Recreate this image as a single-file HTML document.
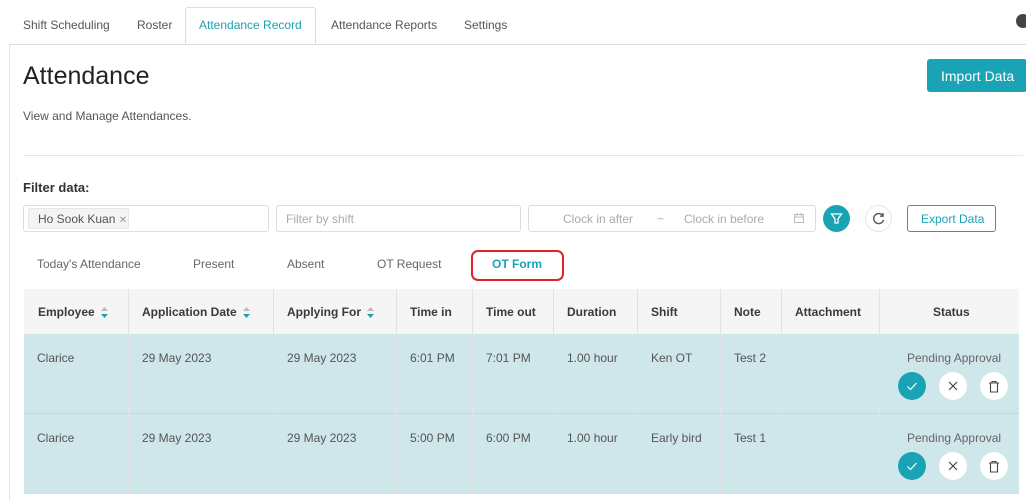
<!DOCTYPE html>
<html><head><style>
*{margin:0;padding:0;box-sizing:border-box}
body{width:1026px;height:500px;overflow:hidden;background:#fff;font-family:"Liberation Sans",sans-serif;color:#333;position:relative}
.a{position:absolute;white-space:nowrap}
.tab{font-size:12px;color:#555;top:18px}
.h{font-size:12px;font-weight:bold;color:#3a3a3a;top:305px}
.c{font-size:12px;color:#555}
.sort{display:inline-block;width:7px;vertical-align:middle;margin-left:6px}
.btn{width:28px;height:28px;border-radius:50%;background:#fff;display:flex;align-items:center;justify-content:center}
</style></head><body>
<div class="a tab" style="left:23px">Shift Scheduling</div>
<div class="a tab" style="left:137px">Roster</div>
<div class="a" style="left:185px;top:7px;width:131px;height:38px;border:1px solid #ddd;border-bottom:none;background:#fff;border-radius:3px 3px 0 0"></div>
<div class="a tab" style="left:199px;color:#1da0b0">Attendance Record</div>
<div class="a tab" style="left:331px">Attendance Reports</div>
<div class="a tab" style="left:464px">Settings</div>
<div class="a" style="left:1016px;top:14px;width:14px;height:14px;border-radius:50%;background:#444"></div>
<div class="a" style="left:9px;top:44px;width:1020px;height:1px;background:#ddd"></div>
<div class="a" style="left:9px;top:44px;width:1px;height:456px;background:#e4e4e4"></div>
<div class="a" style="left:23px;top:62px;font-size:25px;color:#222">Attendance</div>
<div class="a" style="left:927px;top:59px;width:100px;height:33px;background:#1aa3b5;border-radius:3px;color:#fff;font-size:14px;padding:9px 0 0 14px">Import Data</div>
<div class="a" style="left:23px;top:109px;font-size:12px;color:#555">View and Manage Attendances.</div>
<div class="a" style="left:23px;top:155px;width:1000px;height:1px;background:#e6e6e6"></div>
<div class="a" style="left:23px;top:180px;font-size:13px;font-weight:bold;color:#333">Filter data:</div>
<div class="a" style="left:23px;top:205px;width:246px;height:27px;border:1px solid #ddd;border-radius:3px"></div>
<div class="a" style="left:28px;top:208px;width:101px;height:21px;background:#f4f4f4;border:1px solid #e6e6e6;border-radius:2px;font-size:12px;color:#555;padding:3px 0 0 9px">Ho Sook Kuan <span style="color:#999;font-size:10px">✕</span></div>
<div class="a" style="left:276px;top:205px;width:245px;height:27px;border:1px solid #ddd;border-radius:3px;font-size:12px;color:#aaa;padding:6px 0 0 9px">Filter by shift</div>
<div class="a" style="left:528px;top:205px;width:288px;height:27px;border:1px solid #ddd;border-radius:3px"></div>
<div class="a" style="left:563px;top:212px;font-size:12px;color:#aaa">Clock in after</div>
<div class="a" style="left:657px;top:212px;font-size:12px;color:#aaa">~</div>
<div class="a" style="left:684px;top:212px;font-size:12px;color:#aaa">Clock in before</div>
<svg class="a" style="left:793px;top:212px" width="12" height="12" viewBox="0 0 12 12" fill="none" stroke="#bbb"><rect x="1.5" y="2.5" width="9" height="8"/><path d="M1.5 5h9M4 1v3M8 1v3"/></svg>
<div class="a" style="left:823px;top:205px;width:27px;height:27px;border-radius:50%;background:#1aa3b5"></div>
<svg class="a" style="left:830px;top:212px" width="13" height="13" viewBox="0 0 13 13" fill="none" stroke="#fff" stroke-width="1.3"><path d="M1.5 2h10L8 7v4H5V7z"/></svg>
<div class="a" style="left:865px;top:205px;width:27px;height:27px;border-radius:50%;border:1px solid #e4e4e4"></div>
<svg class="a" style="left:871px;top:211px" width="15" height="15" viewBox="0 0 15 15" fill="none" stroke="#555" stroke-width="1.4"><path d="M12 5A5 5 0 1 0 12.5 9"/><path d="M12 2v3.2H9"/></svg>
<div class="a" style="left:907px;top:205px;width:89px;height:27px;border:1px solid #1aa3b5;border-radius:3px;color:#1aa3b5;font-size:12px;padding:6px 0 0 13px">Export Data</div>
<div class="a c" style="left:37px;top:257px;color:#666">Today's Attendance</div>
<div class="a c" style="left:193px;top:257px;color:#666">Present</div>
<div class="a c" style="left:287px;top:257px;color:#666">Absent</div>
<div class="a c" style="left:377px;top:257px;color:#666">OT Request</div>
<div class="a" style="left:471px;top:250px;width:93px;height:31px;border:2.5px solid #e0202a;border-radius:7px"></div>
<div class="a" style="left:492px;top:257px;font-size:12px;font-weight:bold;color:#1aa3b5">OT Form</div>
<div class="a" style="left:24px;top:289px;width:995px;height:45px;background:#f5f5f5"></div>
<div class="a" style="left:24px;top:334px;width:995px;height:159px;background:#cfe6ea"></div>
<div class="a" style="left:24px;top:413px;width:995px;height:1px;background:#bfdadf"></div>
<div class="a" style="left:24px;top:493px;width:995px;height:1px;background:#ddd"></div>
<div class="a h" style="left:38px">Employee<svg class="sort" height="11" viewBox="0 0 7 11"><path d="M0 4L3.5 0 7 4z" fill="#bbb"/><path d="M0 7h7L3.5 11z" fill="#1aa3b5"/></svg></div>
<div class="a h" style="left:142px">Application Date<svg class="sort" height="11" viewBox="0 0 7 11"><path d="M0 4L3.5 0 7 4z" fill="#bbb"/><path d="M0 7h7L3.5 11z" fill="#1aa3b5"/></svg></div>
<div class="a h" style="left:287px">Applying For<svg class="sort" height="11" viewBox="0 0 7 11"><path d="M0 4L3.5 0 7 4z" fill="#bbb"/><path d="M0 7h7L3.5 11z" fill="#1aa3b5"/></svg></div>
<div class="a h" style="left:410px">Time in</div>
<div class="a h" style="left:486px">Time out</div>
<div class="a h" style="left:567px">Duration</div>
<div class="a h" style="left:651px">Shift</div>
<div class="a h" style="left:734px">Note</div>
<div class="a h" style="left:795px">Attachment</div>
<div class="a h" style="left:933px">Status</div>
<script>
[128,273,396,472,553,637,720,781,879].forEach(function(x){var d=document.createElement('div');d.className='a';d.style.cssText='left:'+x+'px;top:289px;width:1px;height:204px;background:#e2e2e2';document.body.appendChild(d);});
var rows=[[351,['Clarice','29 May 2023','29 May 2023','6:01 PM','7:01 PM','1.00 hour','Ken OT','Test 2']],[431,['Clarice','29 May 2023','29 May 2023','5:00 PM','6:00 PM','1.00 hour','Early bird','Test 1']]];
var xs=[37,142,287,410,486,567,651,734];
rows.forEach(function(r){r[1].forEach(function(t,i){var d=document.createElement('div');d.className='a c';d.style.cssText='left:'+xs[i]+'px;top:'+r[0]+'px';d.textContent=t;document.body.appendChild(d);});
var p=document.createElement('div');p.className='a c';p.style.cssText='left:907px;top:'+r[0]+'px;color:#666';p.textContent='Pending Approval';document.body.appendChild(p);
var y=r[0]+21;
var h='<div class="a btn" style="left:898px;top:'+y+'px;background:#1aa3b5"><svg width="14" height="14" viewBox="0 0 14 14" fill="none" stroke="#fff" stroke-width="1.2"><path d="M2.5 7.5l3 3 6-6.5"/></svg></div>'+
'<div class="a btn" style="left:939px;top:'+y+'px"><svg width="12" height="12" viewBox="0 0 12 12" stroke="#444" stroke-width="1.2"><path d="M2 2l8 8M10 2l-8 8"/></svg></div>'+
'<div class="a btn" style="left:980px;top:'+y+'px"><svg width="12" height="13" viewBox="0 0 12 13" fill="none" stroke="#444" stroke-width="1.1"><path d="M1 3h10M4 3V1.5h4V3M2.5 3v9h7V3"/></svg></div>';
document.body.insertAdjacentHTML('beforeend',h);});
</script>
</body></html>
